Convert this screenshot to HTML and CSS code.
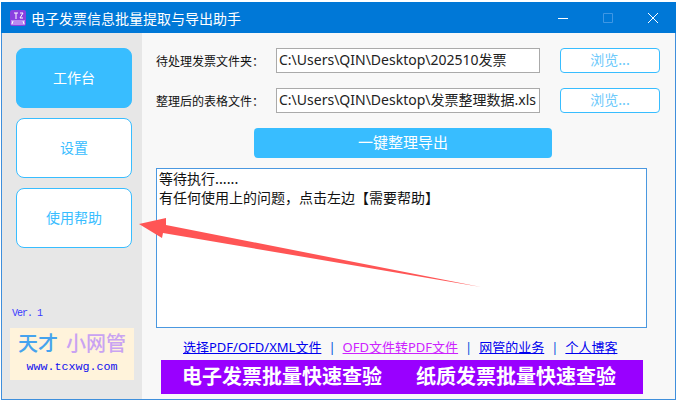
FILE: index.html
```html
<!DOCTYPE html>
<html>
<head>
    <title>电子发票信息批量提取与导出助手</title>
    <link rel="stylesheet" href="styles.css">
</head>
<body>
    <div class="window">
        <div class="titlebar">
            <svg class="app-icon" width="16" height="16" viewBox="0 0 16 16">
                <rect width="16" height="16" rx="2" fill="#8a3fe0"/>
                <path d="M1 10h14v5H1z" fill="#b98af0"/>
                <path d="M4 3h4M6 3v6M10 3h3l-3 5h3M3 11l-1 3M13 11l1 3" stroke="#fff" stroke-width="1" fill="none"/>
            </svg>
            <span class="title">电子发票信息批量提取与导出助手</span>
            <div class="win-controls">
                <svg width="12" height="12" viewBox="0 0 12 12"><path d="M1 6.5h10" stroke="#fff" fill="none"/></svg>
                <svg width="12" height="12" viewBox="0 0 12 12"><path d="M1.5 1.5h9v9h-9z" stroke="#3f97e4" fill="none"/></svg>
                <svg width="12" height="12" viewBox="0 0 12 12"><path d="M1 1l10 10M11 1L1 11" stroke="#fff" fill="none"/></svg>
            </div>
        </div>
        <div class="content">
            <div class="sidebar">
                <div class="nav-btn active">工作台</div>
                <div class="nav-btn">设置</div>
                <div class="nav-btn">使用帮助</div>
                <div class="version">Ver. 1</div>
                <div class="logo">
                    <div class="logo-name"><span class="blue">天才</span><span class="violet">小网管</span></div>
                    <div class="logo-url">www.tcxwg.com</div>
                </div>
            </div>
            <div class="main">
                <div class="field">
                    <label>待处理发票文件夹：</label>
                    <div class="path">C:\Users\QIN\Desktop\202510发票</div>
                    <div class="browse">浏览...</div>
                </div>
                <div class="field">
                    <label>整理后的表格文件：</label>
                    <div class="path">C:\Users\QIN\Desktop\发票整理数据.xls</div>
                    <div class="browse">浏览...</div>
                </div>
                <div class="export">一键整理导出</div>
                <div class="log">等待执行......<br>有任何使用上的问题，点击左边【需要帮助】</div>
                <div class="links">
                    <a href="#">选择PDF/OFD/XML文件</a><span class="sep">|</span><a href="#" class="visited">OFD文件转PDF文件</a><span class="sep">|</span><a href="#">网管的业务</a><span class="sep">|</span><a href="#">个人博客</a>
                </div>
                <div class="banner">
                    <span>电子发票批量快速查验</span>
                    <span>纸质发票批量快速查验</span>
                </div>
            </div>
        </div>
        <svg class="arrow" width="677" height="402" viewBox="0 0 677 402">
            <path d="M139 224L166 218L166 225L481 287L163 233L162 238Z" fill="#ff5555"/>
        </svg>
    </div>
</body>
</html>
```

FILE: styles.css
```css
* {
    box-sizing: border-box;
}
body {
    margin: 0;
    width: 677px;
    height: 402px;
    background-color: white;
    font-family: "Noto Sans CJK SC", "Liberation Sans", sans-serif;
    overflow: hidden;
}
.window {
    margin: 2px 1px 0 1px;
    width: 675px;
    height: 398px;
    border: 1px solid #3f8fdc;
    border-top: none;
    background-color: #f8f8f8;
}
.titlebar {
    display: flex;
    align-items: center;
    height: 31px;
    padding-left: 9px;
    margin: 0 -1px;
    background-color: #0078d7;
    color: white;
}
.title {
    margin-left: 5px;
    font-size: 14px;
}
.win-controls {
    display: flex;
    gap: 33px;
    margin-left: auto;
    margin-right: 17px;
}
.content {
    display: flex;
    height: 366px;
}
.sidebar {
    display: flex;
    flex-direction: column;
    width: 140px;
    padding: 15px 0 0 14px;
    background-color: #e7e7e7;
}
.nav-btn {
    display: flex;
    align-items: center;
    justify-content: center;
    width: 116px;
    height: 60px;
    margin-bottom: 10px;
    padding-bottom: 2px;
    border: 1px solid #38bdff;
    border-radius: 8px;
    background-color: white;
    color: #38bdff;
    font-size: 14px;
}
.nav-btn.active {
    background-color: #38bdff;
    color: white;
}
.version {
    margin: 50px 0 0 -4px;
    height: 17px;
    color: #3a3aff;
    font-family: "Liberation Mono", monospace;
    font-size: 10px;
    letter-spacing: -1px;
}
.logo {
    width: 124px;
    height: 52px;
    margin: 3px 0 0 -6px;
    padding-top: 1px;
    background-color: #fff3db;
    text-align: center;
}
.logo-name {
    font-size: 20px;
    line-height: 28px;
    font-weight: 500;
    white-space: nowrap;
}
.blue {
    color: #46a3ee;
    margin-right: 8px;
}
.violet {
    color: #c9a3f2;
}
.logo-url {
    margin-top: 3px;
    color: #1010ee;
    font-family: "Liberation Mono", monospace;
    font-size: 11.7px;
    line-height: 14px;
    white-space: nowrap;
}
.main {
    flex: 1;
    display: flex;
    flex-direction: column;
    padding: 15px 0 0 14px;
}
.field {
    display: flex;
    align-items: center;
    height: 25px;
    margin-bottom: 15px;
    font-size: 12px;
}
.field label {
    width: 120px;
    white-space: nowrap;
    color: #111;
}
.path {
    width: 264px;
    height: 25px;
    padding-left: 2px;
    border: 1px solid #aaa;
    background-color: white;
    font-family: "Noto Sans", "Noto Sans CJK SC", sans-serif;
    font-size: 14px;
    line-height: 22px;
    color: #222;
    white-space: nowrap;
    overflow: hidden;
}
.browse {
    width: 100px;
    height: 25px;
    margin-left: 20px;
    border: 1px solid #38bdff;
    border-radius: 4px;
    background-color: white;
    color: #6cc9fb;
    text-align: center;
    font-size: 14px;
    line-height: 21px;
}
.export {
    width: 298px;
    height: 30px;
    margin-left: 98px;
    border-radius: 4px;
    background-color: #38bdff;
    color: white;
    text-align: center;
    font-size: 15px;
    line-height: 27px;
}
.log {
    width: 491px;
    height: 160px;
    margin-top: 10px;
    padding: 0 2px;
    border: 1px solid #4a98e0;
    background-color: white;
    color: #111;
    font-size: 14px;
    line-height: 19px;
}
.links {
    margin: 9px 0 0 27px;
    height: 23px;
    font-family: "Noto Sans", "Noto Sans CJK SC", sans-serif;
    font-size: 13px;
    line-height: 20px;
    white-space: nowrap;
}
.links a {
    color: #0000ee;
}
.links a.visited {
    color: #cc22ff;
}
.sep {
    margin: 0 7px;
    color: #0050e0;
}
.banner {
    display: flex;
    justify-content: center;
    gap: 34px;
    width: 482px;
    height: 34px;
    margin-left: 5px;
    padding-right: 6px;
    background-color: #9900ff;
    color: white;
    font-size: 20px;
    font-weight: 700;
    line-height: 32px;
}
.arrow {
    position: absolute;
    top: 0;
    left: 0;
    pointer-events: none;
}
```
